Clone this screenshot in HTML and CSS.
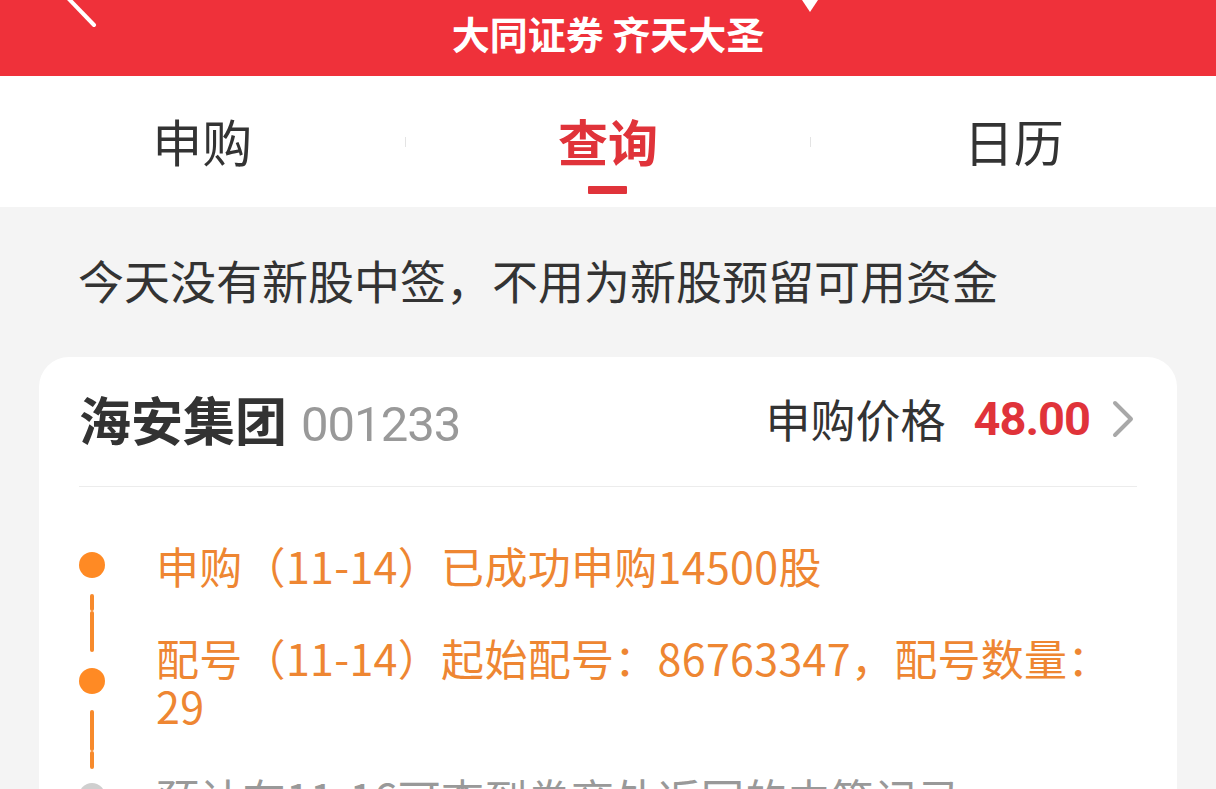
FILE: index.html
```html
<!DOCTYPE html>
<html lang="zh-CN">
<head>
<meta charset="utf-8">
<title>大同证券 齐天大圣</title>
<link rel="stylesheet" href="styles.css">
</head>
<body>
<div class="page">
  <header class="topbar">
    <div class="topbar-left">
      <svg class="back" width="34" height="30" viewBox="0 0 34 30"><line x1="2" y1="-4" x2="30" y2="25" stroke="#fff" stroke-width="4" stroke-linecap="round"/></svg>
    </div>
    <h1 class="title">大同证券 齐天大圣</h1>
    <div class="topbar-right">
      <svg class="caret" width="16" height="14" viewBox="0 0 16 14"><polygon points="0,0 16,0 8,12" fill="#fff"/></svg>
    </div>
  </header>

  <nav class="tabs">
    <div class="tab"><span class="tab-label">申购</span><span class="tab-bar"></span></div>
    <span class="tab-sep"></span>
    <div class="tab active"><span class="tab-label">查询</span><span class="tab-bar"></span></div>
    <span class="tab-sep"></span>
    <div class="tab"><span class="tab-label">日历</span><span class="tab-bar"></span></div>
  </nav>

  <p class="notice">今天没有新股中签，不用为新股预留可用资金</p>

  <section class="card">
    <div class="card-head">
      <div class="stock">
        <span class="stock-name">海安集团</span>
        <span class="stock-code">001233</span>
      </div>
      <div class="price">
        <span class="price-label">申购价格</span>
        <span class="price-value">48.00</span>
        <svg class="chev" width="24" height="38" viewBox="0 0 24 38"><polyline points="4,3 20,19 4,35" fill="none" stroke="#a8a8a8" stroke-width="4" stroke-linecap="round" stroke-linejoin="round"/></svg>
      </div>
    </div>

    <ul class="timeline">
      <li class="step first done">
        <div class="rail"><span class="seg top"></span><span class="dot"></span><span class="seg bottom"></span></div>
        <div class="step-text">申购（11-14）已成功申购14500股</div>
      </li>
      <li class="step done">
        <div class="rail"><span class="seg top"></span><span class="dot"></span><span class="seg bottom"></span></div>
        <div class="step-text">配号（11-14）起始配号：86763347，配号数量：29</div>
      </li>
      <li class="step pending">
        <div class="rail"><span class="seg top"></span><span class="dot"></span><span class="seg bottom"></span></div>
        <div class="step-text">预计在11-16可查到券商处返回的中签记录</div>
      </li>
    </ul>
  </section>
</div>
</body>
</html>
```

FILE: styles.css
```css
* { box-sizing: border-box; }
html, body { margin: 0; padding: 0; }
body {
  background: #f4f4f4;
  font-family: "Noto Sans CJK SC", "Noto Sans", sans-serif;
  color: #333;
  overflow: hidden;
}
.page { width: 1216px; height: 789px; overflow: hidden; }

.topbar {
  height: 76px;
  background: #ef313a;
  display: grid;
  grid-template-columns: 1fr auto 1fr;
  align-items: start;
}
.topbar-left { padding-left: 64px; }
.back { display: block; }
.topbar-right { padding-left: 38px; }
.caret { display: block; }
.title {
  margin: 0;
  padding-top: 11px;
  font-size: 38px;
  line-height: 44px;
  font-weight: 700;
  color: #fff;
}

.tabs {
  height: 131px;
  background: #fff;
  display: grid;
  grid-template-columns: 1fr 1px 1fr 1px 1fr;
}
.tab {
  display: flex;
  flex-direction: column;
  align-items: center;
  padding-top: 39px;
}
.tab-label {
  font-size: 50px;
  line-height: 50px;
  color: #333;
}
.tab-bar {
  margin-top: 21px;
  width: 39px;
  height: 8px;
  border-radius: 1px;
  background: transparent;
}
.tab.active .tab-label { color: #e0333a; font-weight: 700; }
.tab.active .tab-bar { background: #e0333a; }
.tab-sep {
  align-self: start;
  margin-top: 61px;
  height: 10px;
  background: #e4e4e4;
}

.notice {
  margin: 0;
  padding: 49px 78px 55px;
  font-size: 46px;
  line-height: 46px;
  color: #333;
}

.card {
  margin: 0 39px;
  background: #fff;
  border-radius: 30px;
  padding: 0 40px;
  height: 500px;
}
.card-head {
  height: 130px;
  padding-bottom: 6px;
  border-bottom: 1px solid #ececec;
  display: flex;
  align-items: center;
  justify-content: space-between;
}
.stock { display: flex; align-items: baseline; }
.stock-name {
  font-size: 52px;
  font-weight: 700;
  color: #333;
}
.stock-code {
  margin-left: 14px;
  font-family: Roboto, "Noto Sans", sans-serif;
  font-size: 49px;
  color: #999;
  letter-spacing: -1px;
}
.price { display: flex; align-items: center; }
.price-label { font-size: 45px; color: #333; }
.price-value {
  margin-left: 28px;
  font-family: Roboto, "Noto Sans", sans-serif;
  font-size: 47px;
  font-weight: 700;
  color: #e0333a;
  letter-spacing: -1px;
}
.chev { display: block; margin-left: 21px; margin-right: 2px; }

.timeline {
  list-style: none;
  margin: 0;
  padding: 32px 0 0 0;
}
.step {
  display: flex;
  align-items: stretch;
}
.rail {
  width: 26px;
  flex: none;
  display: flex;
  flex-direction: column;
  align-items: center;
  margin-right: 51px;
}
.seg {
  flex: 1;
  width: 4px;
  border-radius: 2px;
  background: #f78a2c;
}
.seg.top { margin-bottom: 16px; }
.seg.bottom { margin-top: 16px; }
.step.first .seg.top { visibility: hidden; }
.step.pending .seg.bottom { visibility: hidden; }
.step.pending .seg.top { margin-bottom: 14px; }
.dot {
  flex: none;
  width: 26px;
  height: 26px;
  border-radius: 50%;
  background: #ff8a24;
}
.step.pending .dot { background: #cfcfcf; }
.step-text {
  padding: 22px 0;
  max-width: 960px;
  font-size: 43px;
  line-height: 48px;
  letter-spacing: 0.3px;
  color: #ee8632;
}
.step.pending .step-text { color: #999; }
```
